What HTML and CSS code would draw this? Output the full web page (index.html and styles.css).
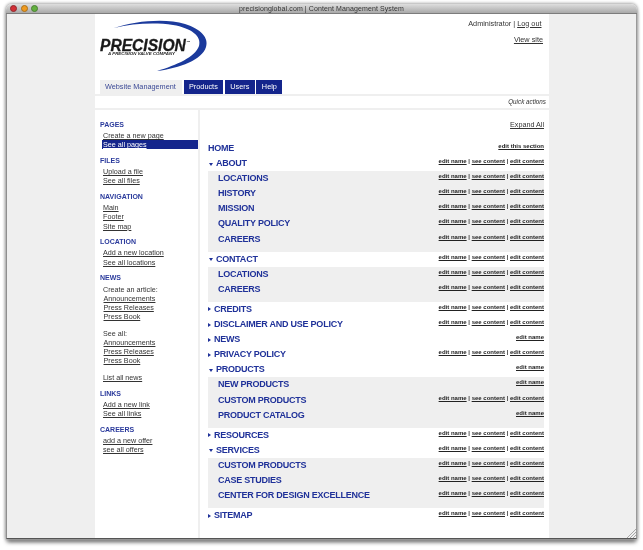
FILE: index.html
```html
<!DOCTYPE html>
<html lang="en">
<head>
<meta charset="utf-8">
<title>precisionglobal.com | Content Management System</title>
<link rel="stylesheet" href="styles.css">
</head>
<body>
<div class="window">
  <div class="titlebar">
    <div class="lights"><span class="light red"></span><span class="light amber"></span><span class="light green"></span></div>
    <div class="wintitle">precisionglobal.com | Content Management System</div>
  </div>
  <div class="canvas">
    <div class="page">
      <header class="head">
        <div class="headtop">
          <svg class="logo" width="112" height="56" viewBox="0 0 112 56" role="img" aria-label="Precision logo">
            <path d="M19 9C40 2 70 -1 90 5C106 10 114 19 111 28C107 41 85 49 62 52C82 46 100 38 104 27C107 17 96 9 78 6C60 3.400 38 4.500 19 9Z" fill="#1b3a9c"/>
            <text x="5" y="32" class="logoword">PRECISION</text>
            <text x="91.500" y="23" class="logotm">TM</text>
            <text x="13" y="36" class="logotag" textLength="67" lengthAdjust="spacingAndGlyphs">A PRECISION VALVE COMPANY</text>
          </svg>
          <div class="usernav">
            <p class="user">Administrator | <a href="#">Log out</a></p>
            <p class="viewsite"><a href="#">View site</a></p>
          </div>
        </div>
        <nav class="tabs">
          <a class="tab current" href="#">Website Management</a>
          <a class="tab" href="#">Products</a>
          <a class="tab" href="#">Users</a>
          <a class="tab" href="#">Help</a>
        </nav>
      </header>
      <div class="quick">Quick actions</div>
      <div class="columns">
        <aside class="side">
          <h3>PAGES</h3>
          <ul><li><a href="#">Create a new page</a></li><li class="selected"><a href="#">See all pages</a></li></ul>
          <h3>FILES</h3>
          <ul><li><a href="#">Upload a file</a></li><li><a href="#">See all files</a></li></ul>
          <h3>NAVIGATION</h3>
          <ul><li><a href="#">Main</a></li><li><a href="#">Footer</a></li><li><a href="#">Site map</a></li></ul>
          <h3>LOCATION</h3>
          <ul><li><a href="#">Add a new location</a></li><li><a href="#">See all locations</a></li></ul>
          <h3>NEWS</h3>
          <ul>
            <li>Create an article:</li>
            <li class="in"><a href="#">Announcements</a></li><li class="in"><a href="#">Press Releases</a></li><li class="in"><a href="#">Press Book</a></li>
            <li class="blank"></li>
            <li>See all:</li>
            <li class="in"><a href="#">Announcements</a></li><li class="in"><a href="#">Press Releases</a></li><li class="in"><a href="#">Press Book</a></li>
            <li class="blank"></li>
            <li><a href="#">List all news</a></li>
          </ul>
          <h3>LINKS</h3>
          <ul><li><a href="#">Add a new link</a></li><li><a href="#">See all links</a></li></ul>
          <h3>CAREERS</h3>
          <ul><li><a href="#">add a new offer</a></li><li><a href="#">see all offers</a></li></ul>
        </aside>
        <main class="main">
          <div class="expand"><a href="#">Expand All</a></div>
          <div class="row"><span class="name">HOME</span><span class="acts"><a href="#">edit this section</a></span></div>
          <div class="row"><span class="name"><i class="down"></i>ABOUT</span><span class="acts"><a href="#">edit name</a> | <a href="#">see content</a> | <a href="#">edit content</a></span></div>
          <div class="group">
            <div class="row sub"><span class="name">LOCATIONS</span><span class="acts"><a href="#">edit name</a> | <a href="#">see content</a> | <a href="#">edit content</a></span></div>
            <div class="row sub"><span class="name">HISTORY</span><span class="acts"><a href="#">edit name</a> | <a href="#">see content</a> | <a href="#">edit content</a></span></div>
            <div class="row sub"><span class="name">MISSION</span><span class="acts"><a href="#">edit name</a> | <a href="#">see content</a> | <a href="#">edit content</a></span></div>
            <div class="row sub"><span class="name">QUALITY POLICY</span><span class="acts"><a href="#">edit name</a> | <a href="#">see content</a> | <a href="#">edit content</a></span></div>
            <div class="row sub"><span class="name">CAREERS</span><span class="acts"><a href="#">edit name</a> | <a href="#">see content</a> | <a href="#">edit content</a></span></div>
          </div>
          <div class="row"><span class="name"><i class="down"></i>CONTACT</span><span class="acts"><a href="#">edit name</a> | <a href="#">see content</a> | <a href="#">edit content</a></span></div>
          <div class="group">
            <div class="row sub"><span class="name">LOCATIONS</span><span class="acts"><a href="#">edit name</a> | <a href="#">see content</a> | <a href="#">edit content</a></span></div>
            <div class="row sub"><span class="name">CAREERS</span><span class="acts"><a href="#">edit name</a> | <a href="#">see content</a> | <a href="#">edit content</a></span></div>
          </div>
          <div class="row"><span class="name"><i class="right"></i>CREDITS</span><span class="acts"><a href="#">edit name</a> | <a href="#">see content</a> | <a href="#">edit content</a></span></div>
          <div class="row"><span class="name"><i class="right"></i>DISCLAIMER AND USE POLICY</span><span class="acts"><a href="#">edit name</a> | <a href="#">see content</a> | <a href="#">edit content</a></span></div>
          <div class="row"><span class="name"><i class="right"></i>NEWS</span><span class="acts"><a href="#">edit name</a></span></div>
          <div class="row"><span class="name"><i class="right"></i>PRIVACY POLICY</span><span class="acts"><a href="#">edit name</a> | <a href="#">see content</a> | <a href="#">edit content</a></span></div>
          <div class="row"><span class="name"><i class="down"></i>PRODUCTS</span><span class="acts"><a href="#">edit name</a></span></div>
          <div class="group">
            <div class="row sub"><span class="name">NEW PRODUCTS</span><span class="acts"><a href="#">edit name</a></span></div>
            <div class="row sub"><span class="name">CUSTOM PRODUCTS</span><span class="acts"><a href="#">edit name</a> | <a href="#">see content</a> | <a href="#">edit content</a></span></div>
            <div class="row sub"><span class="name">PRODUCT CATALOG</span><span class="acts"><a href="#">edit name</a></span></div>
          </div>
          <div class="row"><span class="name"><i class="right"></i>RESOURCES</span><span class="acts"><a href="#">edit name</a> | <a href="#">see content</a> | <a href="#">edit content</a></span></div>
          <div class="row"><span class="name"><i class="down"></i>SERVICES</span><span class="acts"><a href="#">edit name</a> | <a href="#">see content</a> | <a href="#">edit content</a></span></div>
          <div class="group">
            <div class="row sub"><span class="name">CUSTOM PRODUCTS</span><span class="acts"><a href="#">edit name</a> | <a href="#">see content</a> | <a href="#">edit content</a></span></div>
            <div class="row sub"><span class="name">CASE STUDIES</span><span class="acts"><a href="#">edit name</a> | <a href="#">see content</a> | <a href="#">edit content</a></span></div>
            <div class="row sub"><span class="name">CENTER FOR DESIGN EXCELLENCE</span><span class="acts"><a href="#">edit name</a> | <a href="#">see content</a> | <a href="#">edit content</a></span></div>
          </div>
          <div class="row"><span class="name"><i class="right"></i>SITEMAP</span><span class="acts"><a href="#">edit name</a> | <a href="#">see content</a> | <a href="#">edit content</a></span></div>
        </main>
      </div>
    </div>
    <svg class="grip" width="10" height="10" viewBox="0 0 10 10" aria-hidden="true"><path d="M10 1L1 10M10 4L4 10M10 7L7 10" stroke="#a8a8a8" stroke-width="1"/></svg>
  </div>
</div>
</body>
</html>
```
FILE: styles.css
```css
* { box-sizing: border-box; }
html, body { margin: 0; padding: 0; background: #fff; }
body {
  width: 643px;
  height: 550px;
  overflow: hidden;
  padding: 4px 6px 0 6px;
  font-family: "Liberation Sans", Arial, sans-serif;
  color: #333;
}
a { color: #333; text-decoration: underline; }
p, h3, ul { margin: 0; padding: 0; }
ul { list-style: none; }

.window {
  width: 631px;
  height: 535px;
  display: flex;
  flex-direction: column;
  border-radius: 6px 6px 2px 2px;
  box-shadow: 0 0 3px 1px #aaa, 0 4px 4px -1px #555;
  filter: blur(0.35px);
}
.titlebar {
  height: 10px;
  flex: none;
  position: relative;
  display: flex;
  align-items: center;
  justify-content: center;
  border-radius: 6px 6px 0 0;
  border-bottom: 1px solid #7c7c7c;
  background: linear-gradient(#dedede, #a9a9a9);
}
.lights { position: absolute; left: 4px; top: 1px; display: flex; gap: 3.5px; }
.light { width: 7px; height: 7px; border-radius: 50%; }
.red { background: #d32f36; border: 1px solid #8e2a2e; }
.amber { background: #f09a1e; border: 1px solid #a8701c; }
.green { background: #62b03e; border: 1px solid #4a7f34; }
.wintitle { font-size: 7px; color: #333; letter-spacing: 0.1px; line-height: 9px; }

.canvas {
  flex: 1;
  position: relative;
  display: flex;
  justify-content: flex-start;
  padding-left: 88px;
  background: #efefef;
  border: 1px solid #8f8f8f;
  border-width: 0 1px 1px 1px;
  border-right-color: #999;
  border-bottom-color: #555;
}
.grip { position: absolute; right: 0; bottom: 0; }
.page { width: 454px; display: flex; flex-direction: column; background: #efefef; }

.head { background: #fff; height: 80px; flex: none; display: flex; flex-direction: column; }
.headtop { flex: 1; display: flex; justify-content: space-between; }
.logo { display: block; margin: 5px 0 0 0; overflow: visible; }
.logoword { font: italic 700 15.6px "Liberation Sans", Arial, sans-serif; fill: #1a1a1a; stroke: #1a1a1a; stroke-width: 0.3px; }
.logotm { font: 700 2.5px "Liberation Sans", Arial, sans-serif; fill: #222; }
.logotag { font: italic 700 3.6px "Liberation Sans", Arial, sans-serif; fill: #222; }
.usernav { font-size: 7.3px; line-height: 10px; text-align: right; padding-right: 6px; }
.user { margin-top: 4.5px; padding-right: 1.5px; color: #333; }
.viewsite { margin-top: 6.5px; }
.tabs { display: flex; gap: 1.5px; padding-left: 5px; height: 14px; flex: none; }
.tab {
  display: block;
  height: 14px;
  padding: 0 5.5px;
  font-size: 7.3px;
  line-height: 14px;
  text-decoration: none;
  white-space: nowrap;
  color: #fff;
  background: #14258c;
}
.tab.current { background: #efefef; color: #3c4a96; width: 82px; padding: 0 5px; }

.quick {
  flex: none;
  height: 12px;
  margin-top: 2px;
  background: #fff;
  text-align: right;
  padding-right: 3px;
  font-size: 6.3px;
  line-height: 12.6px;
  font-style: italic;
  color: #333;
}
.columns { flex: 1; display: flex; gap: 2px; margin-top: 2px; min-height: 0; }

.side { width: 103px; flex: none; background: #fff; padding: 10px 0 0 5px; }
.side h3 { font-size: 7px; line-height: 10px; font-weight: 700; color: #2a3a9c; }
.side ul { margin: 1.2px 0 6.7px; font-size: 7.2px; line-height: 9.1px; }
.side li { padding-left: 3px; color: #333; }
.side li.in { padding-left: 3.5px; }
.side li.blank { height: 8px; }
.side li.selected { margin-left: 2px; padding-left: 1px; background: #14258c; }
.side li.selected a { color: #fff; }

.main { flex: 1; background: #fff; padding: 10px 5px 0 8px; }
.expand { font-size: 7.2px; line-height: 10px; text-align: right; margin-bottom: 11px; }
.row { height: 15.1px; display: flex; justify-content: space-between; align-items: flex-start; }
.group { background: #efefef; padding-bottom: 5px; }
.sub { padding-left: 10px; }
.name {
  font-size: 9px;
  letter-spacing: -0.24px;
  line-height: 15px;
  font-weight: 700;
  color: #1f3199;
  display: flex;
  align-items: center;
  white-space: nowrap;
}
.acts {
  font-size: 6px;
  line-height: 11px;
  font-weight: 700;
  color: #333;
  white-space: nowrap;
}
.acts a { color: #222; }
.down {
  width: 0; height: 0;
  margin: 1px 3px 0 1px;
  border: 2.5px solid transparent;
  border-bottom-width: 0;
  border-top: 3px solid #1f3199;
}
.right {
  width: 0; height: 0;
  margin-right: 3px;
  border: 2.5px solid transparent;
  border-right-width: 0;
  border-left: 3px solid #1f3199;
}
```
